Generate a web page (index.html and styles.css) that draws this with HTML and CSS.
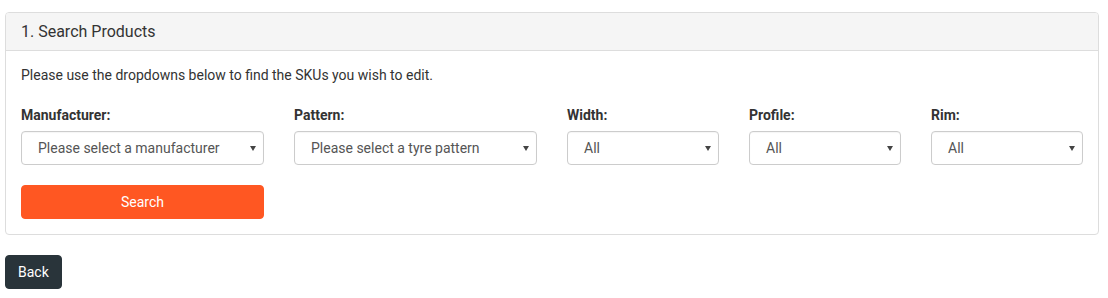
FILE: index.html
```html
<!DOCTYPE html>
<html lang="en">
<head>
<meta charset="utf-8">
<title>Search Products</title>
<link rel="stylesheet" href="styles.css">
</head>
<body>
<div class="page">
  <div class="panel">
    <div class="panel-heading">1. Search Products</div>
    <div class="panel-body">
      <p class="intro">Please use the dropdowns below to find the SKUs you wish to edit.</p>
      <div class="row">
        <div class="field wide">
          <label class="label">Manufacturer:</label>
          <div class="select"><span>Please select a manufacturer</span><svg class="caret" width="6" height="5" viewBox="0 0 6 5"><path d="M0 0H6L3 5Z" fill="#444"/></svg></div>
        </div>
        <div class="field wide">
          <label class="label">Pattern:</label>
          <div class="select"><span>Please select a tyre pattern</span><svg class="caret" width="6" height="5" viewBox="0 0 6 5"><path d="M0 0H6L3 5Z" fill="#444"/></svg></div>
        </div>
        <div class="field narrow">
          <label class="label">Width:</label>
          <div class="select"><span>All</span><svg class="caret" width="6" height="5" viewBox="0 0 6 5"><path d="M0 0H6L3 5Z" fill="#444"/></svg></div>
        </div>
        <div class="field narrow">
          <label class="label">Profile:</label>
          <div class="select"><span>All</span><svg class="caret" width="6" height="5" viewBox="0 0 6 5"><path d="M0 0H6L3 5Z" fill="#444"/></svg></div>
        </div>
        <div class="field narrow">
          <label class="label">Rim:</label>
          <div class="select"><span>All</span><svg class="caret" width="6" height="5" viewBox="0 0 6 5"><path d="M0 0H6L3 5Z" fill="#444"/></svg></div>
        </div>
      </div>
      <div class="row">
        <div class="field wide">
          <button class="btn btn-search">Search</button>
        </div>
      </div>
    </div>
  </div>
  <button class="btn btn-back">Back</button>
</div>
</body>
</html>
```

FILE: styles.css
```css
* { box-sizing: border-box; }
html, body { margin: 0; padding: 0; background: #fff; }
body {
  font-family: Roboto, "Liberation Sans", Arial, sans-serif;
  font-size: 14px;
  line-height: 20px;
  color: #333;
}
.page {
  padding: 12px 9px 0 5px;
}
.panel {
  border: 1px solid #ddd;
  border-radius: 4px;
  background: #fff;
}
.panel-heading {
  background: #f5f5f5;
  border-bottom: 1px solid #ddd;
  border-radius: 3px 3px 0 0;
  height: 38px;
  padding: 9px 15px 0;
  font-size: 16px;
  line-height: 20px;
  color: #333;
}
.panel-body {
  padding: 14px 15px 15px;
}
.intro {
  margin: 0 0 20px;
  color: #333;
}
.row {
  display: flex;
  margin: 0 -15px;
}
.row + .row { margin-top: 20px; }
.field {
  padding: 0 15px;
  display: flex;
  flex-direction: column;
}
.field.wide { width: 25%; }
.field.narrow { width: 16.6667%; }
.label {
  font-weight: bold;
  margin-bottom: 6px;
  color: #333;
}
.select {
  height: 34px;
  border: 1px solid #ccc;
  border-radius: 4px;
  display: flex;
  align-items: center;
  justify-content: space-between;
  padding: 0 7px 0 16px;
  color: #555;
  background: #fff;
  box-shadow: inset 0 1px 1px rgba(0,0,0,0.04);
}
.caret { flex: none; }
.btn {
  font-family: Roboto, "Liberation Sans", Arial, sans-serif;
  font-size: 14px;
  line-height: 20px;
  color: #fff;
  border-radius: 4px;
  height: 34px;
  cursor: pointer;
}
.btn-search {
  width: 100%;
  background: #ff5722;
  border: 1px solid #ff5722;
}
.btn-back {
  margin-top: 20px;
  background: #29343a;
  border: 1px solid #29343a;
  padding: 6px 12px;
}
```
